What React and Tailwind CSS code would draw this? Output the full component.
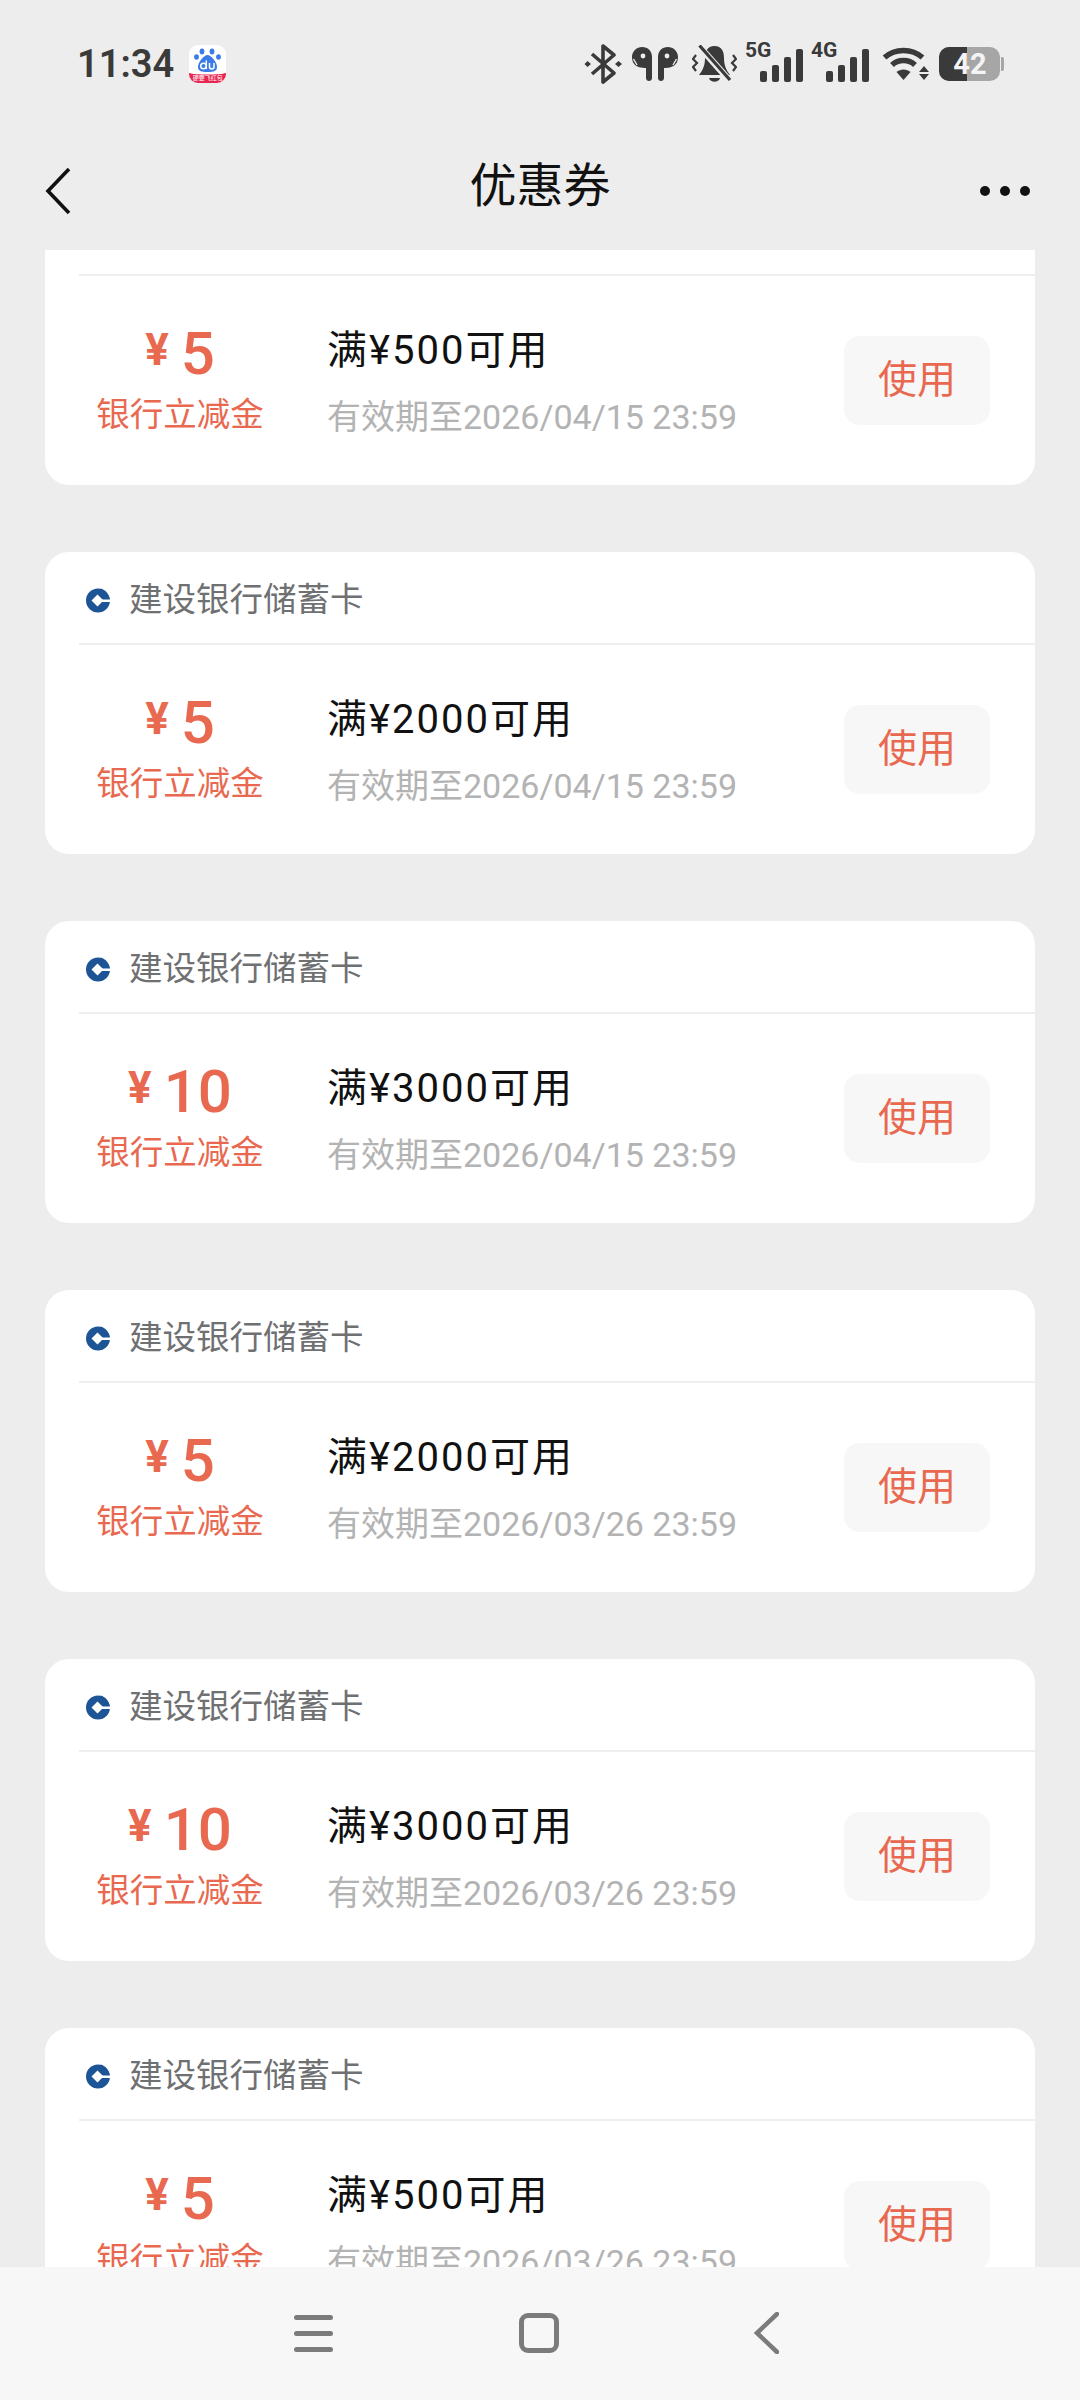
// src/App.jsx
const coupons = [
  { amount: "5", limit: "500", date: "2026/04/15 23:59" },
  { amount: "5", limit: "2000", date: "2026/04/15 23:59" },
  { amount: "10", limit: "3000", date: "2026/04/15 23:59" },
  { amount: "5", limit: "2000", date: "2026/03/26 23:59" },
  { amount: "10", limit: "3000", date: "2026/03/26 23:59" },
  { amount: "5", limit: "500", date: "2026/03/26 23:59" },
];

function BaiduIcon() {
  return (
    <div className="relative ml-[15px] h-[38px] w-[37px] overflow-hidden rounded-[9px] bg-white">
      <svg viewBox="0 0 37 38" className="h-full w-full">
        <g fill="#3a7be8">
          <ellipse cx="13" cy="6.5" rx="2.4" ry="3" />
          <ellipse cx="23" cy="6.5" rx="2.4" ry="3" />
          <ellipse cx="7.5" cy="12" rx="2.4" ry="2.8" />
          <ellipse cx="29.5" cy="12" rx="2.4" ry="2.8" />
          <path d="M18.5 10 C22 10 28 17 28 22 C28 26 25 27 18.5 27 C12 27 9 26 9 22 C9 17 15 10 18.5 10Z" />
        </g>
        <circle cx="14.5" cy="21" r="2.8" fill="none" stroke="#fff" strokeWidth="1.5" />
        <path d="M17.3 15.5 V24 M20.5 18 V22 C20.5 24.5 25 24.5 25 22 V18" fill="none" stroke="#fff" strokeWidth="1.5" />
        <path d="M0 28 C6 30 31 30 37 28 V38 H0Z" fill="#e8264f" />
      </svg>
      <span className="absolute bottom-[1px] left-0 w-full text-center text-[6px] leading-[8px] text-white">
        硬要飞红包
      </span>
    </div>
  );
}

function BluetoothIcon() {
  return (
    <svg viewBox="0 0 38 40" className="h-[40px] w-[38px]" fill="none">
      <path d="M8 10 L30 29 L19 38 V2 L30 11 L8 30" stroke="#3a3a3a" strokeWidth="3.6" strokeLinejoin="round" />
      <path d="M3.5 17 L7 20 L3.5 23 L0.5 20Z M34.500 17 L38 20 L34.500 23 L31 20Z" fill="#3a3a3a" />
    </svg>
  );
}

function AirpodsIcon() {
  return (
    <svg viewBox="0 0 46 34" className="h-[34px] w-[46px]">
      <path d="M10 0 C16 0 20 4 20 10 V31 C20 35 14 35 14 31 V21 C9 21 0 20 0 10 C0 4 5 0 10 0Z" fill="#3a3a3a" />
      <path d="M36 0 C30 0 26 4 26 10 V31 C26 35 32 35 32 31 V21 C37 21 46 20 46 10 C46 4 41 0 36 0Z" fill="#3a3a3a" />
      <circle cx="11" cy="9" r="2.4" fill="#ededed" />
      <circle cx="35" cy="9" r="2.4" fill="#ededed" />
      <path d="M1.500 12 L5 18 M44.500 12 L41 18" stroke="#ededed" strokeWidth="1.4" />
    </svg>
  );
}

function MutedBellIcon() {
  return (
    <svg viewBox="0 0 45 39" className="h-[39px] w-[45px]">
      <path d="M22.500 1 C15 1 13 7 13 13 C13 20 11 25 7 30 H38 C34 25 32 20 32 13 C32 7 30 1 22.500 1Z" fill="#3a3a3a" />
      <path d="M17 33 H28 C27 38 18 38 17 33Z" fill="#3a3a3a" />
      <path d="M7 1 L38 36" stroke="#ededed" strokeWidth="6.500" />
      <path d="M7.500 0.500 L38 35" stroke="#3a3a3a" strokeWidth="3.200" />
      <path d="M4 10 L1 14 L5 18 L1 22 L4 26 M41 10 L44 14 L40 18 L44 22 L41 26" fill="none" stroke="#3a3a3a" strokeWidth="2.200" />
    </svg>
  );
}

function SignalIcon({ label }) {
  return (
    <div className="relative h-[38px] w-[43px] shrink-0">
      <span className="absolute left-[-15px] top-[-4px] text-[21px] font-bold leading-[20px] text-[#3a3a3a]">{label}</span>
      <div className="absolute inset-0 flex items-end justify-between pt-[3px]">
        <div className="h-[11px] w-[7px] rounded-[2px] bg-[#3a3a3a]" />
        <div className="h-[17px] w-[7px] rounded-[2px] bg-[#3a3a3a]" />
        <div className="h-[25px] w-[7px] rounded-[2px] bg-[#3a3a3a]" />
        <div className="h-[33px] w-[7px] rounded-[2px] bg-[#3a3a3a]" />
      </div>
    </div>
  );
}

function WifiIcon() {
  return (
    <svg viewBox="0 0 47 34" className="h-[34px] w-[47px]">
      <path d="M2.500 10.500 C13 1 30 1 40.500 10.500" fill="none" stroke="#3a3a3a" strokeWidth="5.500" />
      <path d="M10 18 C16 12 27 12 33 18" fill="none" stroke="#3a3a3a" strokeWidth="5.500" />
      <path d="M14.500 25 C18 21.500 25 21.500 28.500 25 L21.500 33Z" fill="#3a3a3a" />
      <path d="M42 19 L47 25 H37Z M37 27 H47 L42 33Z" fill="#3a3a3a" />
    </svg>
  );
}

function Battery() {
  return (
    <div className="flex items-center">
      <div className="relative flex h-[34px] w-[61px] overflow-hidden rounded-[10px] bg-[#a6a6a6]">
        <div className="h-full w-[28px] bg-[#3a3a3a]" />
        <span className="absolute inset-0 pl-[1px] text-center text-[29px] font-bold leading-[34px] text-[#f4f4f4]">42</span>
      </div>
      <div className="ml-[1px] h-[14px] w-[3px] rounded-r-[2px] bg-[#a6a6a6]" />
    </div>
  );
}

function StatusBar() {
  return (
    <div className="flex h-[128px] items-center justify-between pl-[77px] pr-[76px]">
      <div className="flex items-center">
        <span className="text-[38px] font-semibold leading-none text-[#3a3a3a]">11:34</span>
        <BaiduIcon />
      </div>
      <div className="flex items-center">
        <BluetoothIcon />
        <div className="ml-[10px]"><AirpodsIcon /></div>
        <div className="ml-[14px]"><MutedBellIcon /></div>
        <div className="ml-[23px] mt-[-2px]"><SignalIcon label="5G" /></div>
        <div className="ml-[23px] mt-[-2px]"><SignalIcon label="4G" /></div>
        <div className="ml-[13px]"><WifiIcon /></div>
        <div className="ml-[10px]"><Battery /></div>
      </div>
    </div>
  );
}

function NavBar() {
  return (
    <div className="flex h-[122px] items-start pl-[45px] pr-[50px]">
      <div className="w-[55px]">
        <svg viewBox="0 0 26 48" className="mt-[39px] h-[48px] w-[26px]" fill="none">
          <path d="M24 2 L3 24 L24 46" stroke="#111" strokeWidth="3.600" />
        </svg>
      </div>
      <h1 className="mt-[29px] flex-1 text-center text-[47px] font-normal leading-[58px] text-[#111]">优惠券</h1>
      <div className="mt-[58px] flex w-[50px] justify-between">
        <div className="h-[10px] w-[10px] rounded-full bg-[#111]" />
        <div className="h-[10px] w-[10px] rounded-full bg-[#111]" />
        <div className="h-[10px] w-[10px] rounded-full bg-[#111]" />
      </div>
    </div>
  );
}

function BankLogo() {
  return (
    <svg viewBox="0 0 26 26" className="h-[26px] w-[26px]">
      <circle cx="13" cy="13.500" r="12" fill="#1d5496" />
      <path d="M12.500 7.500 L18.500 13.500 L12.500 19.500 L6.500 13.500Z" fill="#fff" />
      <path d="M16 12.500 H26 V15 H16Z" fill="#fff" />
      <path d="M15 0 L26 11 V0Z" fill="#fff" />
      <path d="M16 1.500 C19.500 2.700 22.500 5.300 24 9 L22.500 9.800 C20.800 6.500 18 4.200 15 3Z" fill="#1d5496" />
    </svg>
  );
}

function CouponCard({ coupon }) {
  return (
    <div className="mb-[67px] h-[302px] rounded-[24px] bg-white">
      <div className="ml-[34px] flex h-[93px] items-center border-b-2 border-[#efefef] pt-[4px]">
        <div className="ml-[6px] mr-[18px]"><BankLogo /></div>
        <span className="text-[33.5px] leading-[40px] text-[#6f7072]">建设银行储蓄卡</span>
      </div>
      <div className="flex h-[209px] items-center">
        <div className="flex w-[270px] flex-col items-center">
          <div className="mt-[-1px] flex h-[58px] items-center font-medium text-[#e8694f]">
            <span className="mb-[8px] mr-[12px] text-[44px] font-bold leading-none">¥</span>
            <span className="text-[60px] leading-none">{coupon.amount}</span>
          </div>
          <span className="mt-[12px] text-[33.5px] leading-[40px] text-[#e8694f]">银行立减金</span>
        </div>
        <div className="ml-[12px] flex-1">
          <div className="text-[40px] tracking-[2px] leading-[52px] text-[#111]">满¥{coupon.limit}可用</div>
          <div className="mt-[20px] text-[34px] leading-[40px] text-[#b3b3b3]">有效期至{coupon.date}</div>
        </div>
        <button className="mr-[45px] h-[89px] w-[146px] rounded-[16px] bg-[#f7f7f7] text-[39px] text-[#e8694f]">使用</button>
      </div>
    </div>
  );
}

function BottomBar() {
  return (
    <div className="flex h-[133px] shrink-0 items-start bg-[#f7f7f7] pl-[294px]">
      <div className="mt-[48px] flex h-[37px] w-[39px] flex-col justify-between">
        <div className="h-[5px] rounded-full bg-[#7b7b7b]" />
        <div className="h-[5px] rounded-full bg-[#7b7b7b]" />
        <div className="h-[5px] rounded-full bg-[#7b7b7b]" />
      </div>
      <div className="ml-[186px] mt-[46px] h-[40px] w-[40px] rounded-[9px] border-[5px] border-[#7b7b7b]" />
      <svg viewBox="0 0 26 42" className="ml-[194px] mt-[45px] h-[42px] w-[26px]" fill="none">
        <path d="M24 2 L4 21 L24 40" stroke="#7b7b7b" strokeWidth="4.500" strokeLinecap="round" />
      </svg>
    </div>
  );
}

export default function App() {
  return (
    <div className="flex h-[2400px] w-[1080px] flex-col overflow-hidden bg-[#ededed] font-['Roboto','Noto_Sans_CJK_SC',sans-serif]">
      <StatusBar />
      <NavBar />
      <div className="min-h-0 flex-1 overflow-hidden px-[45px]">
        <div className="mt-[-67px]">
          {coupons.map((coupon, i) => (
            <CouponCard key={i} coupon={coupon} />
          ))}
        </div>
      </div>
      <BottomBar />
    </div>
  );
}
